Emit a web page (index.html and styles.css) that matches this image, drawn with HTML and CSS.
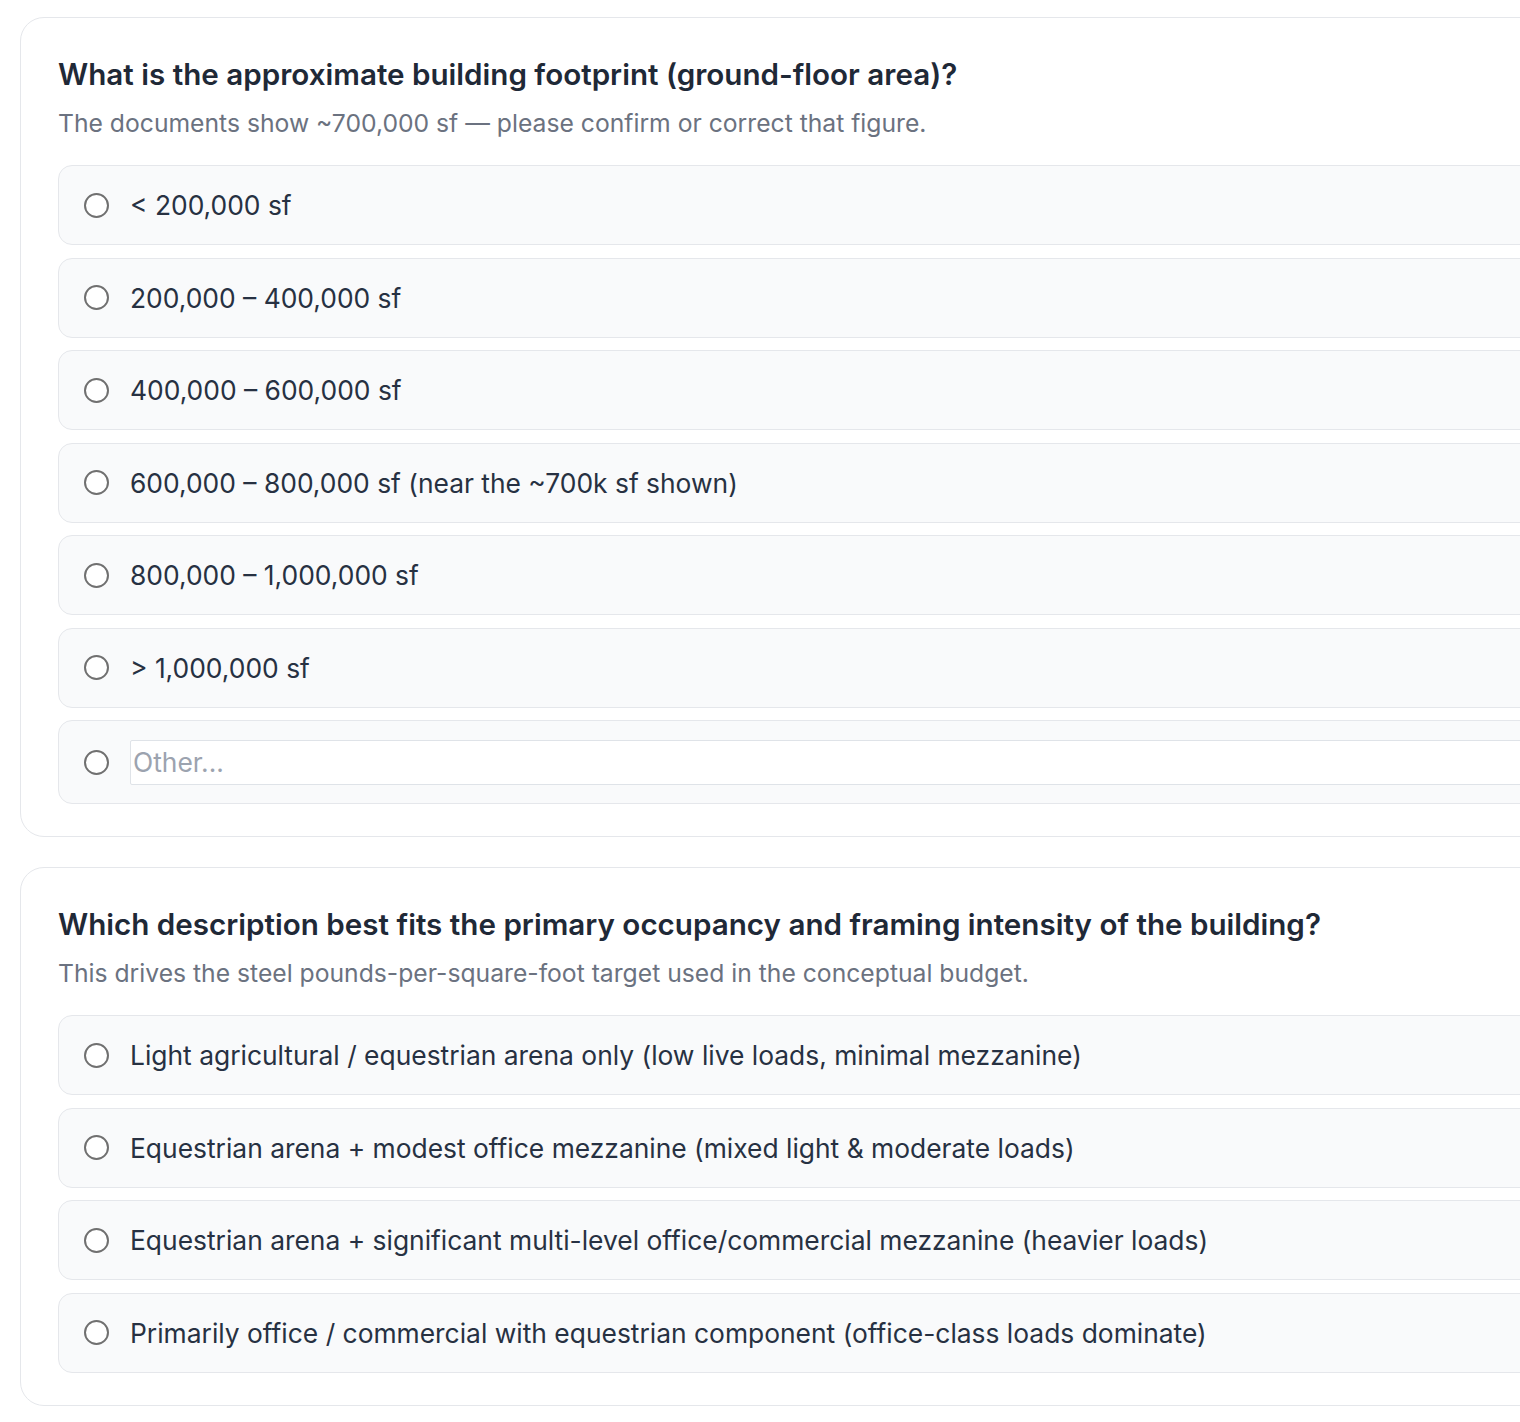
FILE: index.html
```html
<!DOCTYPE html>
<html>
  <head>
    <title>questions</title>
    <meta charset="utf-8" />
    <link rel="stylesheet" href="styles.css">
  </head>
  <body>
    <div class="page">
      <div class="card">
        <h2 class="q-title">What is the approximate building footprint (ground-floor area)?</h2>
        <p class="q-help">The documents show ~700,000 sf — please confirm or correct that figure.</p>
        <div class="options">
          <label class="opt"><input type="radio" name="q1"><span>&lt; 200,000 sf</span></label>
          <label class="opt"><input type="radio" name="q1"><span>200,000 – 400,000 sf</span></label>
          <label class="opt"><input type="radio" name="q1"><span>400,000 – 600,000 sf</span></label>
          <label class="opt"><input type="radio" name="q1"><span>600,000 – 800,000 sf (near the ~700k sf shown)</span></label>
          <label class="opt"><input type="radio" name="q1"><span>800,000 – 1,000,000 sf</span></label>
          <label class="opt"><input type="radio" name="q1"><span>&gt; 1,000,000 sf</span></label>
          <label class="opt opt-other"><input type="radio" name="q1"><input type="text" class="other" placeholder="Other..."></label>
        </div>
      </div>

      <div class="card">
        <h2 class="q-title">Which description best fits the primary occupancy and framing intensity of the building?</h2>
        <p class="q-help">This drives the steel pounds-per-square-foot target used in the conceptual budget.</p>
        <div class="options">
          <label class="opt"><input type="radio" name="q2"><span>Light agricultural / equestrian arena only (low live loads, minimal mezzanine)</span></label>
          <label class="opt"><input type="radio" name="q2"><span>Equestrian arena + modest office mezzanine (mixed light &amp; moderate loads)</span></label>
          <label class="opt"><input type="radio" name="q2"><span>Equestrian arena + significant multi-level office/commercial mezzanine (heavier loads)</span></label>
          <label class="opt"><input type="radio" name="q2"><span>Primarily office / commercial with equestrian component (office-class loads dominate)</span></label>
        </div>
      </div>
    </div>
  </body>
</html>
```

FILE: styles.css
```css
*{
  margin:0;
  padding:0;
  box-sizing:border-box;
}
html,body{
  overflow:hidden;
  background:#fff;
}
body{
  font-family:Inter,"Noto Sans",sans-serif;
  color:#1f2937;
}
.page{
  width:1640px;
  padding:17px 0 0 20px;
  display:flex;
  flex-direction:column;
  gap:30px;
}
.card{
  border:1px solid #e5e7eb;
  border-radius:24px;
  padding:36px 37px 32px 37px;
  background:#fff;
}
.q-title{
  font-size:29.6px;
  line-height:40px;
  font-weight:600;
  color:#1f2937;
}
.q-help{
  margin-top:13px;
  font-size:24.7px;
  line-height:32px;
  color:#6b7280;
}
.options{
  margin-top:26px;
  display:flex;
  flex-direction:column;
  gap:12.5px;
}
.opt{
  display:flex;
  align-items:center;
  gap:21px;
  height:80px;
  padding:0 25px;
  background:#f9fafb;
  border:1px solid #e5e7eb;
  border-radius:14px;
  font-size:26.4px;
  color:#273142;
  cursor:pointer;
}
.opt input[type=radio]{
  appearance:none;
  -webkit-appearance:none;
  flex:none;
  width:25px;
  height:25px;
  border:2px solid #707070;
  border-radius:50%;
  background:#fff;
}
.opt-other{
  height:84px;
}
.other{
  flex:1;
  height:45px;
  border:1.5px solid #dfe3e8;
  border-radius:2px;
  background:#fff;
  font-family:inherit;
  font-size:26.4px;
  padding:0 2px;
  color:#273142;
  outline:none;
}
.other::placeholder{
  color:#9ca3af;
}
```
